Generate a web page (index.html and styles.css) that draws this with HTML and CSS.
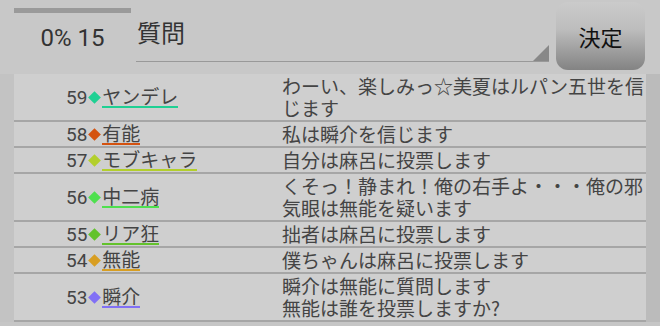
FILE: index.html
```html
<!DOCTYPE html>
<html lang="ja">
<head>
    <meta charset="UTF-8">
    <title>質問</title>
    <link rel="stylesheet" href="styles.css">
</head>
<body>
<header class="top">
    <div class="timer">
        <div class="timer-bar"></div>
        <div class="timer-text">0% 15</div>
    </div>
    <label class="ask">
        <span class="ask-text">質問</span>
        <span class="ask-corner"></span>
    </label>
    <button class="decide" type="button">決定</button>
</header>

<div class="board">
    <ul class="log">
        <li class="row">
            <div class="who"><span class="tag"><span class="no">59</span><i class="mark" style="background:#1fd093"></i><span class="name" style="border-color:#1fd093">ヤンデレ</span></span></div>
            <div class="msg">わーい、楽しみっ☆美夏はルパン五世を信じます</div>
        </li>
        <li class="row">
            <div class="who"><span class="tag"><span class="no">58</span><i class="mark" style="background:#d4520f"></i><span class="name" style="border-color:#d4520f">有能</span></span></div>
            <div class="msg">私は瞬介を信じます</div>
        </li>
        <li class="row">
            <div class="who"><span class="tag"><span class="no">57</span><i class="mark" style="background:#b3cf2c"></i><span class="name" style="border-color:#b3cf2c">モブキャラ</span></span></div>
            <div class="msg">自分は麻呂に投票します</div>
        </li>
        <li class="row">
            <div class="who"><span class="tag"><span class="no">56</span><i class="mark" style="background:#4fe04f"></i><span class="name" style="border-color:#4fe04f">中二病</span></span></div>
            <div class="msg">くそっ！静まれ！俺の右手よ・・・俺の邪気眼は無能を疑います</div>
        </li>
        <li class="row">
            <div class="who"><span class="tag"><span class="no">55</span><i class="mark" style="background:#63c22c"></i><span class="name" style="border-color:#63c22c">リア狂</span></span></div>
            <div class="msg">拙者は麻呂に投票します</div>
        </li>
        <li class="row">
            <div class="who"><span class="tag"><span class="no">54</span><i class="mark" style="background:#d89e22"></i><span class="name" style="border-color:#d89e22">無能</span></span></div>
            <div class="msg">僕ちゃんは麻呂に投票します</div>
        </li>
        <li class="row">
            <div class="who"><span class="tag"><span class="no">53</span><i class="mark" style="background:#8170f5"></i><span class="name" style="border-color:#8170f5">瞬介</span></span></div>
            <div class="msg">瞬介は無能に質問します<br>無能は誰を投票しますか?</div>
        </li>
    </ul>
    <div class="rail"></div>
</div>
</body>
</html>
```

FILE: styles.css
```css
body{
    margin: 0;
    background-color: #c6c6c6;
    font-family: Roboto, "Noto Sans CJK JP", sans-serif;
    color: #3a3a3a;
    overflow: hidden;
}

/* header */
.top{
    display: flex;
    align-items: flex-start;
    height: 74px;
    padding-left: 14px;
    background-color: #c8c8c8;
}
.timer{
    width: 117px;
    padding-top: 8px;
}
.timer-bar{
    height: 5px;
    background-color: #9a9a9a;
}
.timer-text{
    margin-top: 11px;
    font-size: 24px;
    line-height: 28px;
    text-align: center;
    color: #333;
}
.ask{
    position: relative;
    width: 412px;
    margin-left: 5px;
    padding: 16px 0 13px 1px;
    border-bottom: 1px solid #999;
    font-family: "Noto Sans CJK JP", sans-serif;
    font-size: 24px;
    line-height: 32px;
    color: #333;
}
.ask-corner{
    position: absolute;
    right: 0;
    bottom: 0;
    width: 0;
    height: 0;
    border-left: 16px solid transparent;
    border-bottom: 16px solid #888;
}
.decide{
    width: 89px;
    height: 68px;
    margin: 2px 0 0 7px;
    border: none;
    border-radius: 12px;
    background: linear-gradient(#cbcbcb, #bdbdbd 40%, #838383);
    font-family: "Noto Sans CJK JP", sans-serif;
    font-size: 22px;
    color: #111;
    padding: 0;
}

/* list */
.board{
    display: flex;
    padding-left: 14px;
    background-color: #c3c3c3;
}
.log{
    flex: 1;
    margin: 0;
    padding: 0;
    list-style: none;
    background-color: #cfcfcf;
}
.rail{
    width: 14px;
    background-color: #bbbbbb;
}
.row{
    display: grid;
    grid-template-columns: 268px 1fr;
    border-bottom: 2px solid #a6a6a6;
    font-family: "Noto Sans CJK JP", sans-serif;
    font-size: 19px;
    color: #444;
}
.who{
    display: flex;
    align-items: center;
    padding-left: 52px;
}
.tag{
    display: flex;
    align-items: baseline;
}
.no{
    font-family: Roboto, sans-serif;
    line-height: 20px;
}
.mark{
    align-self: center;
    width: 9px;
    height: 9px;
    margin: 0 3px;
    transform: rotate(45deg);
}
.name{
    line-height: 20px;
    border-bottom: 2px solid;
}
.msg{
    padding: 1px 0;
    line-height: 22px;
}
```
